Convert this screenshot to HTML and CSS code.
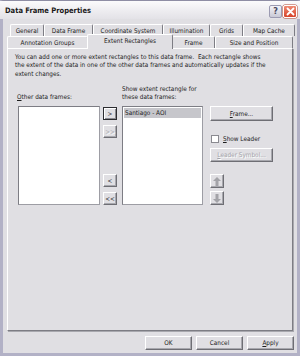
FILE: index.html
```html
<!DOCTYPE html>
<html>
<head>
    <meta charset="UTF-8">
    <title>Data Frame Properties</title>
    <link rel="stylesheet" href="styles.css">
</head>
<body>
    <div class="window">
        <div class="titlebar">
            <span class="title">Data Frame Properties</span>
            <div class="caption-buttons">
                <span class="cbtn help">?</span>
                <span class="cbtn close">
                    <svg width="9" height="9" viewBox="0 0 9 9"><path d="M1.5 1.5 L7.5 7.5 M7.5 1.5 L1.5 7.5" stroke="#fff" stroke-width="1.8" stroke-linecap="round"/></svg>
                </span>
            </div>
        </div>

        <div class="body">
            <div class="tabs">
                <div class="tab-row row-back">
                    <div class="tab">General</div>
                    <div class="tab">Data Frame</div>
                    <div class="tab">Coordinate System</div>
                    <div class="tab">Illumination</div>
                    <div class="tab">Grids</div>
                    <div class="tab">Map Cache</div>
                </div>
                <div class="tab-row row-front">
                    <div class="tab">Annotation Groups</div>
                    <div class="tab active">Extent Rectangles</div>
                    <div class="tab">Frame</div>
                    <div class="tab">Size and Position</div>
                </div>
            </div>

            <div class="panel">
                <p class="intro">You can add one or more extent rectangles to this data frame.&nbsp; Each rectangle shows<br>the extent of the data in one of the other data frames and automatically updates if the<br>extent changes.</p>

                <div class="lists">
                    <div class="label label-left"><u>O</u>ther data frames:</div>
                    <div class="label label-right">Show extent rectangle for<br>these data frames:</div>

                    <div class="listbox list-left"></div>

                    <div class="move-buttons">
                        <div class="move-group">
                            <span class="btn small default">&gt;</span>
                            <span class="btn small disabled">&gt;&gt;</span>
                        </div>
                        <div class="move-group">
                            <span class="btn small">&lt;</span>
                            <span class="btn small">&lt;&lt;</span>
                        </div>
                    </div>

                    <div class="listbox list-right">
                        <div class="item selected">Santiago - AOI</div>
                    </div>

                    <div class="side">
                        <span class="btn wide"><span><u>F</u>rame...</span></span>
                        <label class="check"><span class="box"></span><span><u>S</u>how Leader</span></label>
                        <span class="btn wide disabled"><span><u>L</u>eader Symbol...</span></span>
                        <div class="order-buttons">
                            <span class="btn small arrow">
                                <svg width="8" height="9" viewBox="0 0 8 9"><path d="M4 0 L8 4 L5.5 4 L5.5 9 L2.5 9 L2.5 4 L0 4 Z" fill="#a3a3a8"/></svg>
                            </span>
                            <span class="btn small arrow">
                                <svg width="8" height="9" viewBox="0 0 8 9"><path d="M4 9 L8 5 L5.5 5 L5.5 0 L2.5 0 L2.5 5 L0 5 Z" fill="#a3a3a8"/></svg>
                            </span>
                        </div>
                    </div>
                </div>
            </div>

            <div class="footer">
                <span class="btn action">OK</span>
                <span class="btn action">Cancel</span>
                <span class="btn action"><span><u>A</u>pply</span></span>
            </div>
        </div>
    </div>
</body>
</html>
```

FILE: styles.css
```css
body {
    margin: 0;
    font-family: 'DejaVu Sans Condensed', 'DejaVu Sans', sans-serif;
    font-stretch: condensed;
    font-size: 6.4px;
    color: #1e1e1e;
    background: #e0dfe3;
}
u {
    text-decoration: underline;
    text-underline-offset: 1px;
}
.window {
    width: 300px;
    height: 356px;
    box-sizing: border-box;
    border: 3px solid #b2b1c6;
    border-top: 1px solid #8e8da4;
    background: #e0dfe3;
    display: flex;
    flex-direction: column;
}
.titlebar {
    height: 18px;
    flex: none;
    display: flex;
    align-items: center;
    justify-content: space-between;
    padding: 0 3px 0 5px;
    margin: 0 -3px;
    background: linear-gradient(#fbfbfc, #ecebef 60%, #e3e2e7);
}
.title {
    font-weight: bold;
    font-size: 7.5px;
    color: #1a1a1a;
}
.caption-buttons {
    display: flex;
    gap: 1px;
    padding-top: 2px;
}
.cbtn {
    width: 13px;
    height: 13px;
    box-sizing: border-box;
    border-radius: 2px;
    display: flex;
    align-items: center;
    justify-content: center;
}
.help {
    background: linear-gradient(#f4f4f8, #c9c9d6);
    border: 1px solid #9c9bb2;
    color: #4a4a5e;
    font-weight: bold;
    font-size: 9px;
}
.close {
    width: 14px;
    background: linear-gradient(#ef8b73, #d7432a);
    border: 1px solid #fff;
    box-shadow: 0 0 0 0.5px #b0442f;
}
.body {
    flex: 1;
    display: flex;
    flex-direction: column;
    padding: 5px 4px 3px 4px;
}

/* tabs */
.tabs {
    flex: none;
}
.tab-row {
    display: grid;
    height: 12px;
}
.row-back {
    grid-template-columns: 34px 49px 70px 47px 33px 52px;
    margin-left: 3px;
}
.row-front {
    grid-template-columns: 81px 84px 43px 78px;
}
.tab {
    box-sizing: border-box;
    border: 1px solid #fff;
    border-bottom: none;
    border-right: 1px solid #7d7d84;
    border-radius: 2px 2px 0 0;
    display: flex;
    align-items: center;
    justify-content: center;
    white-space: nowrap;
    background: #e0dfe3;
}
.tab.active {
    height: 15px;
    margin-top: -2px;
    margin-left: -1px;
    margin-right: -1px;
    position: relative;
    z-index: 1;
    padding-bottom: 2px;
}

/* panel */
.panel {
    flex: none;
    height: 283px;
    box-sizing: border-box;
    border: 1px solid #fff;
    border-right: 1px solid #7d7d84;
    border-bottom: 1px solid #7d7d84;
    box-shadow: 1px 1px 0 #a8a8ae;
    padding: 4px 7px 0 7px;
}
.intro {
    margin: 0;
    line-height: 8.3px;
    white-space: nowrap;
}
.lists {
    margin-top: 7px;
    margin-left: 3px;
    display: grid;
    grid-template-columns: 85px 14px 93px 63px;
    grid-template-rows: auto 99px;
    row-gap: 5px;
}
.label {
    line-height: 8.3px;
    align-self: end;
    white-space: nowrap;
}
.label-left {
    grid-column: 1;
    margin-left: -1px;
}
.label-right {
    grid-column: 3 / 5;
    margin-left: 5px;
}
.listbox {
    box-sizing: border-box;
    background: #fff;
    border: 1px solid #9d9da4;
    border-top-color: #7d7d84;
    border-left-color: #7d7d84;
    padding: 1px;
}
.list-left {
    grid-column: 1;
    margin-right: 3px;
}
.list-right {
    grid-column: 3;
    margin-left: 5px;
    width: 81px;
}
.item {
    height: 10px;
    line-height: 10px;
    padding-left: 1px;
}
.item.selected {
    background: #c6c6cb;
}

/* buttons */
.btn {
    box-sizing: border-box;
    display: flex;
    align-items: center;
    justify-content: center;
    background: #e0dfe3;
    border: 1px solid #fff;
    border-right-color: #6e6e74;
    border-bottom-color: #6e6e74;
    box-shadow: inset -1px -1px 0 #a8a8ae;
    white-space: nowrap;
}
.btn.small {
    width: 14px;
    height: 13px;
    font-size: 6.4px;
}
.btn.default {
    border: 1px solid #2c2c30;
    box-shadow: inset 1px 1px 0 #fff, inset -1px -1px 0 #8a8a90;
}
.btn.disabled {
    color: #a4a4aa;
    text-shadow: 1px 1px 0 #fff;
}
.move-buttons {
    grid-column: 2;
    display: flex;
    flex-direction: column;
    justify-content: space-between;
    padding-top: 1px;
}
.move-group {
    display: flex;
    flex-direction: column;
    gap: 5px;
}
.side {
    grid-column: 4;
    display: flex;
    flex-direction: column;
    align-items: flex-start;
}
.btn.wide {
    width: 63px;
    height: 15px;
}
.check {
    display: flex;
    align-items: center;
    gap: 4px;
    margin: 14px 0 5px 1px;
    height: 8px;
}
.box {
    width: 8px;
    height: 8px;
    box-sizing: border-box;
    background: #fff;
    border: 1px solid #8a8a90;
}
.side .btn.wide.disabled {
    height: 14px;
}
.order-buttons {
    margin-top: auto;
    display: flex;
    flex-direction: column;
    gap: 3px;
}
.btn.arrow {
    height: 14px;
}

/* footer */
.footer {
    flex: none;
    display: flex;
    justify-content: flex-end;
    gap: 4px;
    padding-top: 5px;
    margin-right: -1px;
}
.btn.action {
    width: 47px;
    height: 14px;
}
```
